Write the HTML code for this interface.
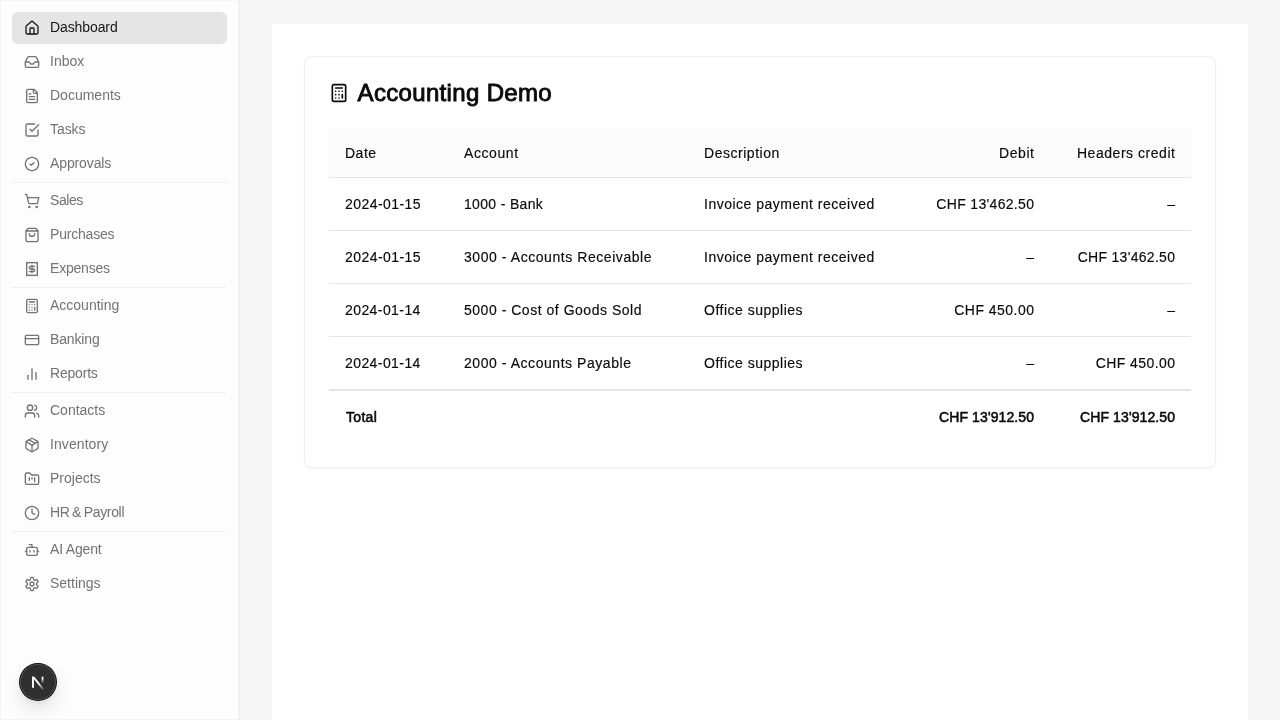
<!DOCTYPE html>
<html lang="en">
<head>
<meta charset="utf-8">
<title>Accounting Demo</title>
<style>
*{box-sizing:border-box;margin:0;padding:0}
html,body{width:1280px;height:720px;overflow:hidden}
body{font-family:"Liberation Sans",sans-serif;background:#f7f7f7;color:#0a0a0a;font-size:14px;position:relative}
.sidebar{position:absolute;left:0;top:0;width:240px;height:720px;background:#fdfdfd;border-right:2px solid #f1f1f1;border-left:1px solid #f3f3f3;border-top:1px solid #f5f5f5;border-bottom:1px solid #f3f3f3;padding:11px 11px 12px 11px;display:flex;flex-direction:column;gap:2px}
.item{height:32px;border-radius:6px;display:flex;align-items:center;padding-left:12px;color:#737373;font-size:14px;letter-spacing:0;white-space:nowrap;flex:none}
.item svg{width:16px;height:16px;flex:none;margin-right:10px;stroke:currentColor;fill:none;stroke-width:2;stroke-linecap:round;stroke-linejoin:round}
.item span{position:relative;top:-1px}
.item.active{background:#e5e5e5;color:#171717}
.sidebar,.main{will-change:transform}
.sep{height:1px;background:#f0f0f0;flex:none}
.main{position:absolute;left:272px;top:24px;width:976px;height:700px;background:#fff}
.card{position:absolute;left:32px;top:32px;width:912px;height:412px;border:1px solid #efefef;border-radius:8px;background:#fff;box-shadow:0 1px 2px rgba(0,0,0,.05);padding:24px}
.title{display:flex;align-items:center;height:24px;font-size:24px;font-weight:400;-webkit-text-stroke:.9px #0a0a0a;letter-spacing:.33px;color:#0a0a0a;white-space:nowrap}
.title svg{width:20px;height:20px;margin-right:8.6px;stroke:#0a0a0a;fill:none;stroke-width:2;stroke-linecap:round;stroke-linejoin:round;flex:none}
table{margin-top:24px;width:862px;border-collapse:separate;border-spacing:0;table-layout:fixed;font-size:14px;-webkit-text-stroke:.15px #0a0a0a}
th{height:49px;background:#fbfbfb;font-weight:400;text-align:left;padding:0 16px;border-bottom:1px solid #e5e5e5;white-space:nowrap}
td{height:53px;padding:0 16px;border-bottom:1px solid #e5e5e5;white-space:nowrap}
.r{text-align:right}
tr.total td{border-bottom:none;border-top:1px solid #e5e5e5;font-weight:400;-webkit-text-stroke:.55px #0a0a0a;height:53px}
.nbadge{position:absolute;left:19px;top:663px;width:38px;height:38px;border-radius:50%;box-shadow:0 10px 18px rgba(0,0,0,.09),0 3px 6px rgba(0,0,0,.05)}
.nbadge svg{display:block}
</style>
</head>
<body>
<div class="sidebar">
<div class="item active"><svg viewBox="0 0 24 24"><path d="M15 21v-8a1 1 0 0 0-1-1h-4a1 1 0 0 0-1 1v8"/><path d="M3 10a2 2 0 0 1 .709-1.528l7-5.999a2 2 0 0 1 2.582 0l7 5.999A2 2 0 0 1 21 10v9a2 2 0 0 1-2 2H5a2 2 0 0 1-2-2z"/></svg><span style="letter-spacing:-0.1px">Dashboard</span></div>
<div class="item"><svg viewBox="0 0 24 24"><polyline points="22 12 16 12 14 15 10 15 8 12 2 12"/><path d="M5.45 5.11 2 12v6a2 2 0 0 0 2 2h16a2 2 0 0 0 2-2v-6l-3.45-6.89A2 2 0 0 0 16.76 4H7.24a2 2 0 0 0-1.79 1.11z"/></svg><span>Inbox</span></div>
<div class="item"><svg viewBox="0 0 24 24"><path d="M15 2H6a2 2 0 0 0-2 2v16a2 2 0 0 0 2 2h12a2 2 0 0 0 2-2V7Z"/><path d="M14 2v4a2 2 0 0 0 2 2h4"/><path d="M10 9H8"/><path d="M16 13H8"/><path d="M16 17H8"/></svg><span>Documents</span></div>
<div class="item"><svg viewBox="0 0 24 24"><path d="m9 11 3 3L22 4"/><path d="M21 12v7a2 2 0 0 1-2 2H5a2 2 0 0 1-2-2V5a2 2 0 0 1 2-2h11"/></svg><span style="letter-spacing:-0.08px">Tasks</span></div>
<div class="item"><svg viewBox="0 0 24 24"><circle cx="12" cy="12" r="10"/><path d="m9 12 2 2 4-4"/></svg><span style="letter-spacing:-0.12px">Approvals</span></div>
<div class="sep"></div>
<div class="item"><svg viewBox="0 0 24 24"><circle cx="8" cy="21" r="1"/><circle cx="19" cy="21" r="1"/><path d="M2.05 2.05h2l2.66 12.42a2 2 0 0 0 2 1.58h9.78a2 2 0 0 0 1.95-1.57l1.65-7.43H5.12"/></svg><span style="letter-spacing:-0.42px">Sales</span></div>
<div class="item"><svg viewBox="0 0 24 24"><path d="M6 2 3 6v14a2 2 0 0 0 2 2h14a2 2 0 0 0 2-2V6l-3-4Z"/><path d="M3 6h18"/><path d="M16 10a4 4 0 0 1-8 0"/></svg><span style="letter-spacing:-0.2px">Purchases</span></div>
<div class="item"><svg viewBox="0 0 24 24"><path d="M4 2v20l2-1 2 1 2-1 2 1 2-1 2 1 2-1 2 1V2l-2 1-2-1-2 1-2-1-2 1-2-1-2 1Z"/><path d="M16 8h-6a2 2 0 1 0 0 4h4a2 2 0 1 1 0 4H8"/><path d="M12 17.5v-11"/></svg><span style="letter-spacing:-0.2px">Expenses</span></div>
<div class="sep"></div>
<div class="item"><svg viewBox="0 0 24 24"><rect width="16" height="20" x="4" y="2" rx="2"/><line x1="8" x2="16" y1="6" y2="6"/><line x1="16" x2="16" y1="14" y2="18"/><path d="M16 10h.01"/><path d="M12 10h.01"/><path d="M8 10h.01"/><path d="M12 14h.01"/><path d="M8 14h.01"/><path d="M12 18h.01"/><path d="M8 18h.01"/></svg><span>Accounting</span></div>
<div class="item"><svg viewBox="0 0 24 24"><rect width="20" height="14" x="2" y="5" rx="2"/><line x1="2" x2="22" y1="10" y2="10"/></svg><span style="letter-spacing:-.15px">Banking</span></div>
<div class="item"><svg viewBox="0 0 24 24"><path d="M18 20V10"/><path d="M12 20V4"/><path d="M6 20v-6"/></svg><span style="letter-spacing:-0.2px">Reports</span></div>
<div class="sep"></div>
<div class="item"><svg viewBox="0 0 24 24"><path d="M16 21v-2a4 4 0 0 0-4-4H6a4 4 0 0 0-4 4v2"/><circle cx="9" cy="7" r="4"/><path d="M22 21v-2a4 4 0 0 0-3-3.87"/><path d="M16 3.13a4 4 0 0 1 0 7.75"/></svg><span>Contacts</span></div>
<div class="item"><svg viewBox="0 0 24 24"><path d="M11 21.73a2 2 0 0 0 2 0l7-4A2 2 0 0 0 21 16V8a2 2 0 0 0-1-1.73l-7-4a2 2 0 0 0-2 0l-7 4A2 2 0 0 0 3 8v8a2 2 0 0 0 1 1.73z"/><path d="M12 22V12"/><path d="m3.3 7 7.703 4.734a2 2 0 0 0 1.994 0L20.7 7"/><path d="m7.5 4.27 9 5.15"/></svg><span style="letter-spacing:0.08px">Inventory</span></div>
<div class="item"><svg viewBox="0 0 24 24"><path d="M4 20h16a2 2 0 0 0 2-2V8a2 2 0 0 0-2-2h-7.930a2 2 0 0 1-1.660-.9l-.820-1.200A2 2 0 0 0 7.930 3H4a2 2 0 0 0-2 2v13c0 1.100.9 2 2 2Z"/><path d="M8 10v4"/><path d="M12 10v2"/><path d="M16 10v6"/></svg><span>Projects</span></div>
<div class="item"><svg viewBox="0 0 24 24"><circle cx="12" cy="12" r="10"/><polyline points="12 6 12 12 16 14"/></svg><span style="letter-spacing:-.33px;word-spacing:-1px">HR &amp; Payroll</span></div>
<div class="sep"></div>
<div class="item"><svg viewBox="0 0 24 24"><path d="M12 8V4H8"/><rect width="16" height="12" x="4" y="8" rx="2"/><path d="M2 14h2"/><path d="M20 14h2"/><path d="M15 13v2"/><path d="M9 13v2"/></svg><span style="letter-spacing:-0.18px">AI Agent</span></div>
<div class="item"><svg viewBox="0 0 24 24"><path d="M12.22 2h-.44a2 2 0 0 0-2 2v.18a2 2 0 0 1-1 1.730l-.43.250a2 2 0 0 1-2 0l-.15-.08a2 2 0 0 0-2.730.730l-.22.380a2 2 0 0 0 .730 2.730l.15.100a2 2 0 0 1 1 1.720v.51a2 2 0 0 1-1 1.740l-.15.090a2 2 0 0 0-.730 2.730l.22.380a2 2 0 0 0 2.730.730l.15-.08a2 2 0 0 1 2 0l.43.250a2 2 0 0 1 1 1.730V20a2 2 0 0 0 2 2h.44a2 2 0 0 0 2-2v-.18a2 2 0 0 1 1-1.730l.43-.250a2 2 0 0 1 2 0l.15.080a2 2 0 0 0 2.730-.730l.22-.390a2 2 0 0 0-.730-2.730l-.15-.08a2 2 0 0 1-1-1.740v-.5a2 2 0 0 1 1-1.740l.15-.09a2 2 0 0 0 .730-2.730l-.22-.380a2 2 0 0 0-2.730-.730l-.15.080a2 2 0 0 1-2 0l-.43-.250a2 2 0 0 1-1-1.730V4a2 2 0 0 0-2-2z"/><circle cx="12" cy="12" r="3"/></svg><span>Settings</span></div>
</div>
<div class="nbadge"><svg width="38" height="38" viewBox="0 0 38 38"><defs><linearGradient id="ng1" x1="13" y1="14" x2="24" y2="26.500" gradientUnits="userSpaceOnUse"><stop offset=".55" stop-color="#fff"/><stop offset="1" stop-color="#fff" stop-opacity=".15"/></linearGradient><linearGradient id="ng2" x1="0" y1="13.700" x2="0" y2="20.500" gradientUnits="userSpaceOnUse"><stop offset=".3" stop-color="#fff"/><stop offset="1" stop-color="#fff" stop-opacity="0"/></linearGradient></defs><circle cx="19" cy="19" r="19" fill="#0c0c0c"/><circle cx="19" cy="19" r="18" fill="#5a5a5a"/><circle cx="19" cy="19" r="17.200" fill="#2f2f2f"/><clipPath id="nc"><rect x="10" y="13.700" width="20" height="16"/></clipPath><g clip-path="url(#nc)" fill="none" stroke-width="1.900"><path d="M14 24.700V13" stroke="#fff"/><path d="M13.100 12.300L24.300 26.500" stroke="url(#ng1)"/></g><rect x="22.700" y="13.700" width="1.700" height="6.800" fill="url(#ng2)"/></svg></div>
<div class="main">
<div class="card">
<div class="title"><svg viewBox="0 0 24 24"><rect width="16" height="20" x="4" y="2" rx="2"/><line x1="8" x2="16" y1="6" y2="6"/><line x1="16" x2="16" y1="14" y2="18"/><path d="M16 10h.01"/><path d="M12 10h.01"/><path d="M8 10h.01"/><path d="M12 14h.01"/><path d="M8 14h.01"/><path d="M12 18h.01"/><path d="M8 18h.01"/></svg><span>Accounting Demo</span></div>
<table>
<colgroup><col style="width:119px"><col style="width:240px"><col style="width:200px"><col style="width:162px"><col style="width:141px"></colgroup>
<thead><tr><th><span style="letter-spacing:0.5px">Date</span></th><th><span style="letter-spacing:0.58px">Account</span></th><th><span style="letter-spacing:0.53px">Description</span></th><th class="r"><span style="letter-spacing:0.56px;margin-right:-0.56px">Debit</span></th><th class="r"><span style="letter-spacing:0.54px;margin-right:-0.54px">Headers credit</span></th></tr></thead>
<tbody>
<tr><td><span style="letter-spacing:0.44px">2024-01-15</span></td><td><span style="letter-spacing:0.33px">1000 - Bank</span></td><td><span style="letter-spacing:0.5px">Invoice payment received</span></td><td class="r"><span style="letter-spacing:0.33px;margin-right:-0.33px">CHF 13'462.50</span></td><td class="r">–</td></tr>
<tr><td><span style="letter-spacing:0.44px">2024-01-15</span></td><td><span style="letter-spacing:0.56px">3000 - Accounts Receivable</span></td><td><span style="letter-spacing:0.5px">Invoice payment received</span></td><td class="r">–</td><td class="r"><span style="letter-spacing:0.3px;margin-right:-0.3px">CHF 13'462.50</span></td></tr>
<tr><td><span style="letter-spacing:0.42px">2024-01-14</span></td><td><span style="letter-spacing:0.52px">5000 - Cost of Goods Sold</span></td><td><span style="letter-spacing:0.5px">Office supplies</span></td><td class="r"><span style="letter-spacing:0.47px;margin-right:-0.47px">CHF 450.00</span></td><td class="r">–</td></tr>
<tr><td><span style="letter-spacing:0.42px">2024-01-14</span></td><td><span style="letter-spacing:0.55px">2000 - Accounts Payable</span></td><td><span style="letter-spacing:0.5px">Office supplies</span></td><td class="r">–</td><td class="r"><span style="letter-spacing:0.42px;margin-right:-0.42px">CHF 450.00</span></td></tr>
</tbody>
<tfoot><tr class="total"><td><span style="letter-spacing:.3px;margin-left:1px">Total</span></td><td></td><td></td><td class="r"><span style="letter-spacing:.1px;margin-right:-.1px">CHF 13'912.50</span></td><td class="r"><span style="letter-spacing:.1px;margin-right:-.1px">CHF 13'912.50</span></td></tr></tfoot>
</table>
</div>
</div>
</body>
</html>
